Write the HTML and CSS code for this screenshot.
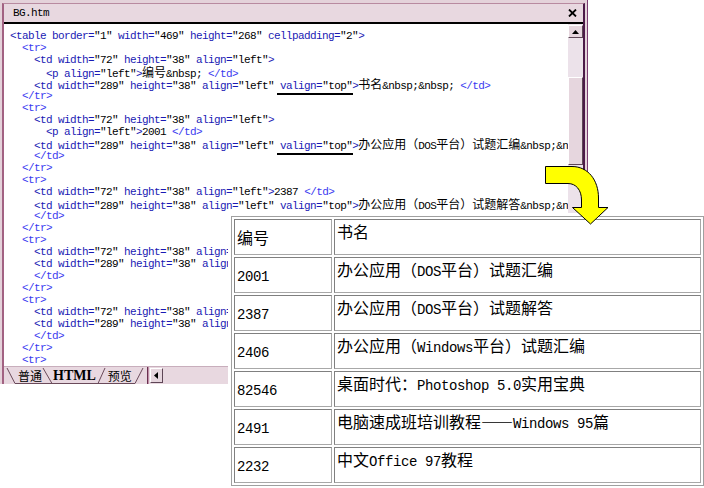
FILE: index.html
```html
<!DOCTYPE html>
<html lang="zh-CN">
<head>
<meta charset="utf-8">
<title>BG.htm</title>
<link rel="stylesheet" href="styles.css">
</head>
<body>
<div class="desk">
  <div class="window">
    <div class="frame">
      <div class="titlebar">
        <span class="title">BG.htm</span>
        <svg class="close" width="9" height="8" viewBox="0 0 9 8"><path d="M1 0.5 L8 7.5 M8 0.5 L1 7.5" stroke="#000" stroke-width="1.8" fill="none"/></svg>
      </div>
      <div class="body">
        <div class="code">
<div class="ln">&lt;table border=<span class="v">"1"</span> width=<span class="v">"469"</span> height=<span class="v">"268"</span> cellpadding=<span class="v">"2"</span>&gt;</div>
<div class="ln b">  &lt;tr&gt;</div>
<div class="ln">    &lt;td width=<span class="v">"72"</span> height=<span class="v">"38"</span> align=<span class="v">"left"</span>&gt;</div>
<div class="ln">      &lt;p align=<span class="v">"left"</span>&gt;<span class="x"><span class="z">编号</span>&amp;nbsp; </span><span class="b">&lt;/td&gt;</span></div>
<div class="ln">    &lt;td width=<span class="v">"289"</span> height=<span class="v">"38"</span> align=<span class="v">"left"</span> <span class="u">valign=<span class="v">"top"</span></span>&gt;<span class="x"><span class="z">书名</span>&amp;nbsp;&amp;nbsp; </span><span class="b">&lt;/td&gt;</span></div>
<div class="ln b">  &lt;/tr&gt;</div>
<div class="ln b">  &lt;tr&gt;</div>
<div class="ln">    &lt;td width=<span class="v">"72"</span> height=<span class="v">"38"</span> align=<span class="v">"left"</span>&gt;</div>
<div class="ln">      &lt;p align=<span class="v">"left"</span>&gt;<span class="x">2001 </span><span class="b">&lt;/td&gt;</span></div>
<div class="ln">    &lt;td width=<span class="v">"289"</span> height=<span class="v">"38"</span> align=<span class="v">"left"</span> <span class="u">valign=<span class="v">"top"</span></span>&gt;<span class="x"><span class="z">办公应用（</span>DOS<span class="z">平台）试题汇编</span>&amp;nbsp;&amp;nbsp;</span><span class="b">&lt;/td&gt;</span></div>
<div class="ln b">    &lt;/td&gt;</div>
<div class="ln b">  &lt;/tr&gt;</div>
<div class="ln b">  &lt;tr&gt;</div>
<div class="ln">    &lt;td width=<span class="v">"72"</span> height=<span class="v">"38"</span> align=<span class="v">"left"</span>&gt;<span class="x">2387 </span><span class="b">&lt;/td&gt;</span></div>
<div class="ln">    &lt;td width=<span class="v">"289"</span> height=<span class="v">"38"</span> align=<span class="v">"left"</span> <span class="u">valign=<span class="v">"top"</span></span>&gt;<span class="x"><span class="z">办公应用（</span>DOS<span class="z">平台）试题解答</span>&amp;nbsp;&amp;nbsp;</span><span class="b">&lt;/td&gt;</span></div>
<div class="ln b">    &lt;/td&gt;</div>
<div class="ln b">  &lt;/tr&gt;</div>
<div class="ln b">  &lt;tr&gt;</div>
<div class="ln">    &lt;td width=<span class="v">"72"</span> height=<span class="v">"38"</span> align=<span class="v">"left"</span>&gt;<span class="x">2406 </span><span class="b">&lt;/td&gt;</span></div>
<div class="ln">    &lt;td width=<span class="v">"289"</span> height=<span class="v">"38"</span> align=<span class="v">"left"</span> valign=<span class="v">"top"</span>&gt;</div>
<div class="ln b">    &lt;/td&gt;</div>
<div class="ln b">  &lt;/tr&gt;</div>
<div class="ln b">  &lt;tr&gt;</div>
<div class="ln">    &lt;td width=<span class="v">"72"</span> height=<span class="v">"38"</span> align=<span class="v">"left"</span>&gt;<span class="x">82546 </span><span class="b">&lt;/td&gt;</span></div>
<div class="ln">    &lt;td width=<span class="v">"289"</span> height=<span class="v">"38"</span> align=<span class="v">"left"</span> valign=<span class="v">"top"</span>&gt;</div>
<div class="ln b">    &lt;/td&gt;</div>
<div class="ln b">  &lt;/tr&gt;</div>
<div class="ln b">  &lt;tr&gt;</div>
        </div>
        <div class="vscroll">
          <div class="sbtn"><svg width="7" height="4" viewBox="0 0 7 4"><path d="M0 4 L3.5 0 L7 4 Z" fill="#000"/></svg></div>
          <div class="thumb"></div>
        </div>
      </div>
      <div class="tabbar">
        <svg class="tabart" width="150" height="17" viewBox="0 0 150 17"><path d="M3 1 L11 16.5 M39 1 L48 16.5 M101 1 L94 16.5 M139 1 L131 16.5 M11 16.5 H131" stroke="#6a4a5a" stroke-width="1" fill="none"/></svg>
        <span class="tab t-normal">普通</span>
        <span class="tab t-html">HTML</span>
        <span class="tab t-preview">预览</span>
        <span class="tsep"></span>
        <span class="hbtn"><svg width="4" height="7" viewBox="0 0 4 7"><path d="M4 0 L0 3.5 L4 7 Z" fill="#000"/></svg></span>
        <span class="htrack"></span>
      </div>
    </div>
  </div>

  <div class="preview">
    <table class="grid">
      <tr><td class="c1">编号</td><td class="c2">书名</td></tr>
      <tr><td class="c1"><span class="m">2001</span></td><td class="c2">办公应用（<span class="m">DOS</span>平台）试题汇编</td></tr>
      <tr><td class="c1"><span class="m">2387</span></td><td class="c2">办公应用（<span class="m">DOS</span>平台）试题解答</td></tr>
      <tr><td class="c1"><span class="m">2406</span></td><td class="c2">办公应用（<span class="m">Windows</span>平台）试题汇编</td></tr>
      <tr><td class="c1"><span class="m">82546</span></td><td class="c2">桌面时代：<span class="m">Photoshop 5.0</span>实用宝典</td></tr>
      <tr><td class="c1"><span class="m">2491</span></td><td class="c2">电脑速成班培训教程——<span class="m">Windows 95</span>篇</td></tr>
      <tr><td class="c1"><span class="m">2232</span></td><td class="c2">中文<span class="m">Office 97</span>教程</td></tr>
    </table>
  </div>

  <svg class="arrow" width="76" height="70" viewBox="540 160 76 70">
    <path d="M545.5 166.5 H572 C588 166.5 598.5 180 598.5 198 V207.5 H608 L590.5 224 L572.5 207.5 H581.5 V200 C581.5 190 576 183.5 568 183.5 H545.5 Z" fill="#ffff00" stroke="#000" stroke-width="1"/>
  </svg>
</div>
</body>
</html>
```

FILE: styles.css
```css
* { box-sizing: border-box; }
html, body { margin: 0; padding: 0; background: #fff; }
body { width: 704px; height: 488px; overflow: hidden; }

.desk {
  position: relative;
  width: 704px;
  height: 488px;
  overflow: hidden;
  background: #fff;
}

/* editor window */
.window {
  width: 588px;
  height: 384px;
  padding: 3px 2px 0 2px;
  background: #e4d2da;
  border-right: 1px solid #7c3c72;
}
.frame {
  height: 100%;
  display: flex;
  flex-direction: column;
  border-left: 2px solid #a26282;
  border-top: 1px solid #b88aa0;
  border-right: 2px solid #4c1a48;
}
.titlebar {
  height: 20px;
  flex: none;
  display: flex;
  align-items: center;
  justify-content: space-between;
  padding: 0 6px 0 9px;
  background: #e8d8e0;
  border-bottom: 2px solid #000;
  font: 11px/1 "Liberation Mono", monospace;
  letter-spacing: -0.6px;
  color: #000;
}
.body {
  flex: 1;
  display: flex;
  min-height: 0;
}
.code {
  flex: 1;
  min-width: 0;
  background: #fff;
  overflow: hidden;
  padding: 6px 0 0 6px;
  font-family: "Liberation Mono", monospace;
  font-size: 11px;
  letter-spacing: -0.6px;
  color: #1a1ab4;
}
.ln {
  height: 12px;
  line-height: 12px;
  white-space: pre;
}
.v, .x { color: #000; }
.b { color: #3a3af0; }
.z {
  font-family: "Noto Sans CJK SC", sans-serif;
  font-size: 12px;
  letter-spacing: 0;
}
.u { position: relative; }
.u::after {
  content: "";
  position: absolute;
  left: -3px;
  right: -1px;
  bottom: -3px;
  height: 2px;
  background: #000;
}

.vscroll {
  width: 15px;
  flex: none;
  background: #ece2ea;
  padding-top: 1px;
}
.sbtn, .thumb, .hbtn {
  border: 1px solid;
  border-color: #fff #5e4656 #5e4656 #fff;
  background: #e6d6de;
}
.sbtn {
  height: 13px;
  display: flex;
  align-items: center;
  justify-content: center;
}
.thumb {
  margin-top: 39px;
  height: 88px;
}

/* bottom tabs */
.tabbar {
  position: relative;
  height: 18px;
  flex: none;
  display: flex;
  align-items: center;
  background: #e8d8e0;
  border-top: 1px solid #c8aebc;
  color: #000;
}
.tabart {
  position: absolute;
  left: 0;
  top: 0;
}
.tab {
  position: relative;
  font-family: "Noto Sans CJK SC", sans-serif;
  font-size: 12px;
  line-height: 14px;
}
.t-normal { margin-left: 14px; }
.t-html {
  margin-left: 11px;
  font-family: "Liberation Serif", serif;
  font-weight: bold;
  font-size: 14px;
}
.t-preview { margin-left: 12px; }
.tsep {
  margin-left: 15px;
  width: 2px;
  height: 17px;
  border-left: 1px solid #6a3050;
  border-right: 1px solid #c090a8;
}
.hbtn {
  margin-left: 1px;
  width: 13px;
  height: 15px;
  display: flex;
  align-items: center;
  justify-content: center;
}
.htrack { flex: 1; }

/* rendered table preview */
.preview {
  position: absolute;
  left: 228px;
  top: 213px;
  padding: 3px;
  background: #fff;
}
.grid {
  border-collapse: separate;
  border-spacing: 2px;
  border: 1px solid #a0a0a0;
  table-layout: fixed;
  width: 473px;
}
.grid td {
  height: 36px;
  padding: 2px;
  border: 1px solid;
  border-color: #808080 #a8a8a8 #a8a8a8 #808080;
  font-family: "Noto Sans CJK SC", sans-serif;
  font-size: 16px;
  line-height: 18px;
  color: #000;
}
.grid td.c1 { width: 98px; vertical-align: middle; }
.grid td.c2 { width: 367px; vertical-align: top; }
.m {
  font-family: "Liberation Mono", monospace;
  font-size: 14px;
  letter-spacing: -0.4px;
}

.arrow {
  position: absolute;
  left: 540px;
  top: 160px;
}
```
